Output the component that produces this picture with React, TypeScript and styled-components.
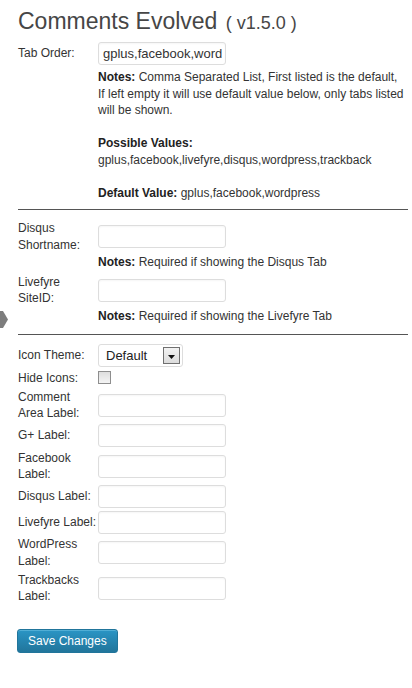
import styled, { createGlobalStyle } from 'styled-components';

const GlobalStyle = createGlobalStyle`
  html, body {
    margin: 0;
    padding: 0;
    background: #ffffff;
  }
  body {
    font-family: "Liberation Sans", Arial, sans-serif;
    font-size: 12px;
    color: #333333;
  }
`;

const Page = styled.div`
  position: relative;
  padding: 0 4px 40px 18px;
`;

const Title = styled.h2`
  margin: 8px 0 0;
  height: 26px;
  font-size: 23px;
  font-weight: normal;
  line-height: 26px;
  color: #464646;
`;

const Version = styled.span`
  font-size: 18px;
  line-height: 1;
  margin-left: 2px;
`;

const Section = styled.div<{ $top: number; $gap: number }>`
  display: flex;
  flex-direction: column;
  gap: ${p => p.$gap}px;
  padding-top: ${p => p.$top}px;
`;

const Row = styled.div`
  display: grid;
  grid-template-columns: 80px 1fr;
  align-items: center;
`;

const Label = styled.label`
  font-size: 12px;
  line-height: 16.5px;
  color: #333333;
`;

const Note = styled.div<{ $space: number }>`
  grid-column: 2;
  margin-top: ${p => p.$space}px;
  max-width: 306px;
  font-size: 12px;
  line-height: 16.5px;
  color: #333333;

  b {
    color: #222222;
  }
`;

const TextInput = styled.input`
  box-sizing: border-box;
  width: 128px;
  height: 23px;
  margin: 0;
  padding: 0 3px 0 4px;
  border: 1px solid #dddddd;
  border-radius: 3px;
  background: #ffffff;
  box-shadow: inset 0 1px 2px rgba(0, 0, 0, 0.04);
  font-family: "Liberation Sans", Arial, sans-serif;
  font-size: 13px;
  color: #333333;
  outline: none;
`;

const SelectBox = styled.div`
  box-sizing: border-box;
  width: 85px;
  height: 23px;
  padding: 2px 2px 2px 7px;
  display: flex;
  align-items: center;
  justify-content: space-between;
  border: 1px solid #dddddd;
  border-radius: 3px;
  background: #ffffff;
  font-size: 13px;
  color: #222222;
`;

const ArrowButton = styled.span`
  box-sizing: border-box;
  width: 17px;
  height: 17px;
  display: flex;
  align-items: center;
  justify-content: center;
  padding-top: 2px;
  border: 1px solid #707070;
  background: linear-gradient(#f2f2f2, #dcdcdc);
`;

const Checkbox = styled.span`
  display: block;
  box-sizing: border-box;
  width: 13px;
  height: 13px;
  border: 1px solid #8e8e8e;
  background: linear-gradient(#dedede, #f4f4f4);
`;

const Divider = styled.hr`
  margin: 0;
  border: none;
  border-top: 1px solid #555555;
  height: 0;
`;

const Actions = styled.div`
  padding-top: 24px;
  margin-left: -1px;
`;

const SaveButton = styled.button`
  height: 24px;
  padding: 0 10px;
  border: 1px solid #21759b;
  border-radius: 3px;
  background: linear-gradient(#2a95c5, #21759b);
  box-shadow: inset 0 1px 0 rgba(120, 200, 230, 0.5);
  font-family: "Liberation Sans", Arial, sans-serif;
  font-size: 12px;
  color: #ffffff;
  cursor: pointer;
`;

const MenuArrow = styled.svg`
  position: absolute;
  left: 0;
  top: 303px;
`;

const labels = [
  { text: 'Comment Area Label:' },
  { text: 'G+ Label:' },
  { text: 'Facebook Label:' },
  { text: 'Disqus Label:' },
  { text: 'Livefyre Label:' },
  { text: 'WordPress Label:' },
  { text: 'Trackbacks Label:' },
];

export default function App() {
  return (
    <>
      <GlobalStyle />
      <Page>
        <Title>
          Comments Evolved <Version>( v1.5.0 )</Version>
        </Title>

        <Section $top={8} $gap={0}>
          <Row>
            <Label>Tab Order:</Label>
            <TextInput defaultValue="gplus,facebook,wordpress" />
            <Note $space={4}>
              <b>Notes:</b> Comma Separated List, First listed is the default, If left empty it
              will use default value below, only tabs listed will be shown.
              <br />
              <br />
              <b>Possible Values:</b>
              <br />
              gplus,facebook,livefyre,disqus,wordpress,trackback
              <br />
              <br />
              <b>Default Value:</b> gplus,facebook,wordpress
            </Note>
          </Row>
        </Section>

        <Section $top={8} $gap={0}>
          <Divider />
        </Section>

        <Section $top={10} $gap={3}>
          <Row>
            <Label>Disqus Shortname:</Label>
            <TextInput />
            <Note $space={1}>
              <b>Notes:</b> Required if showing the Disqus Tab
            </Note>
          </Row>
          <Row>
            <Label>Livefyre SiteID:</Label>
            <TextInput />
            <Note $space={1}>
              <b>Notes:</b> Required if showing the Livefyre Tab
            </Note>
          </Row>
        </Section>

        <Section $top={10} $gap={0}>
          <Divider />
        </Section>

        <Section $top={9} $gap={2.5}>
          <Row>
            <Label>Icon Theme:</Label>
            <SelectBox>
              Default
              <ArrowButton>
                <svg width="7" height="4" viewBox="0 0 7 4">
                  <path d="M0 0h7L3.5 4z" fill="#111" />
                </svg>
              </ArrowButton>
            </SelectBox>
          </Row>
          <Row>
            <Label>Hide Icons:</Label>
            <Checkbox />
          </Row>
          {labels.map(l => (
            <Row key={l.text}>
              <Label>{l.text}</Label>
              <TextInput />
            </Row>
          ))}
        </Section>

        <Actions>
          <SaveButton>Save Changes</SaveButton>
        </Actions>

        <MenuArrow width="8" height="17" viewBox="0 0 8 17">
          <polygon points="0,0 3,0 8,8.5 3,17 0,17" fill="#7d7d7d" />
        </MenuArrow>
      </Page>
    </>
  );
}
